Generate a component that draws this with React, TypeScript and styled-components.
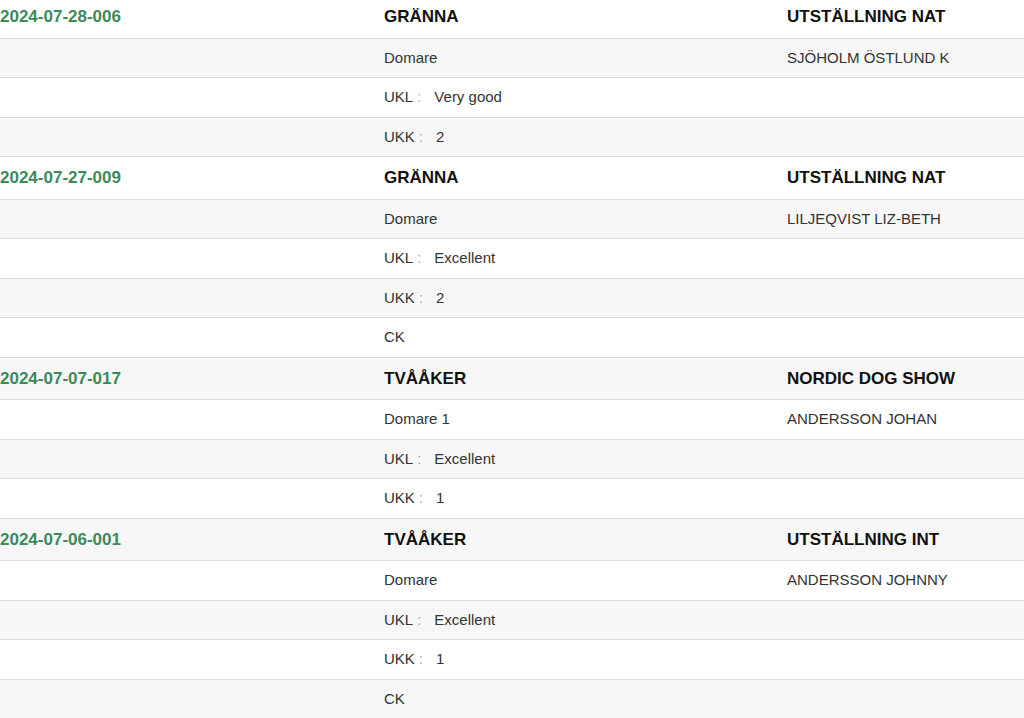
import React from 'react';
import styled, { createGlobalStyle } from 'styled-components';

type Detail =
  | { kind: 'judge'; label: string; name: string }
  | { kind: 'grade'; label: string; value: string }
  | { kind: 'note'; text: string };

type Show = {
  id: string;
  place: string;
  type: string;
  details: Detail[];
};

const shows: Show[] = [
  {
    id: '2024-07-28-006',
    place: 'GRÄNNA',
    type: 'UTSTÄLLNING NAT',
    details: [
      { kind: 'judge', label: 'Domare', name: 'SJÖHOLM ÖSTLUND K' },
      { kind: 'grade', label: 'UKL', value: 'Very good' },
      { kind: 'grade', label: 'UKK', value: '2' },
    ],
  },
  {
    id: '2024-07-27-009',
    place: 'GRÄNNA',
    type: 'UTSTÄLLNING NAT',
    details: [
      { kind: 'judge', label: 'Domare', name: 'LILJEQVIST LIZ-BETH' },
      { kind: 'grade', label: 'UKL', value: 'Excellent' },
      { kind: 'grade', label: 'UKK', value: '2' },
      { kind: 'note', text: 'CK' },
    ],
  },
  {
    id: '2024-07-07-017',
    place: 'TVÅÅKER',
    type: 'NORDIC DOG SHOW',
    details: [
      { kind: 'judge', label: 'Domare 1', name: 'ANDERSSON JOHAN' },
      { kind: 'grade', label: 'UKL', value: 'Excellent' },
      { kind: 'grade', label: 'UKK', value: '1' },
    ],
  },
  {
    id: '2024-07-06-001',
    place: 'TVÅÅKER',
    type: 'UTSTÄLLNING INT',
    details: [
      { kind: 'judge', label: 'Domare', name: 'ANDERSSON JOHNNY' },
      { kind: 'grade', label: 'UKL', value: 'Excellent' },
      { kind: 'grade', label: 'UKK', value: '1' },
      { kind: 'note', text: 'CK' },
    ],
  },
];

const App = () => {
  const rows: React.ReactNode[] = [];
  shows.forEach(show => {
    rows.push(
      <Row key={show.id} $head>
        <IdCell>{show.id}</IdCell>
        <HeadCell>{show.place}</HeadCell>
        <HeadCell>{show.type}</HeadCell>
      </Row>
    );
    show.details.forEach((d, i) => {
      const key = `${show.id}-${i}`;
      if (d.kind === 'judge') {
        rows.push(
          <Row key={key}>
            <Cell />
            <Cell>{d.label}</Cell>
            <Cell>{d.name}</Cell>
          </Row>
        );
      } else if (d.kind === 'grade') {
        rows.push(
          <Row key={key}>
            <Cell />
            <Cell>
              {d.label}
              <Colon>:</Colon>
              {d.value}
            </Cell>
            <Cell />
          </Row>
        );
      } else {
        rows.push(
          <Row key={key}>
            <Cell />
            <Cell>{d.text}</Cell>
            <Cell />
          </Row>
        );
      }
    });
  });

  return (
    <>
      <GlobalStyle />
      <Table>{rows}</Table>
    </>
  );
};

export default App;

const GlobalStyle = createGlobalStyle`
  html, body {
    margin: 0;
    padding: 0;
    background: #fff;
    overflow: hidden;
  }
  body {
    font-family: "Liberation Sans", Arial, sans-serif;
    color: #333;
  }
`;

const Table = styled.div`
  margin-top: -4px;
  display: flex;
  flex-direction: column;
`;

const Row = styled.div<{ $head?: boolean }>`
  display: grid;
  grid-template-columns: 376px 403px 1fr;
  border-bottom: 1px solid #dcdcdc;
  font-size: ${p => (p.$head ? '17px' : '15px')};
  line-height: ${p => (p.$head ? '25.5px' : '22.5px')};

  &:nth-child(even) {
    background: #f7f7f7;
  }
`;

const Cell = styled.div`
  padding: 8px 8px;
  white-space: nowrap;
  color: #333;
`;

const HeadCell = styled(Cell)`
  font-weight: bold;
  color: #111;
`;

const IdCell = styled(Cell)`
  padding-left: 0;
  font-weight: bold;
  color: #3c8a5c;
`;

const Colon = styled.span`
  color: #aaa;
  margin: 0 13px 0 4px;
`;
